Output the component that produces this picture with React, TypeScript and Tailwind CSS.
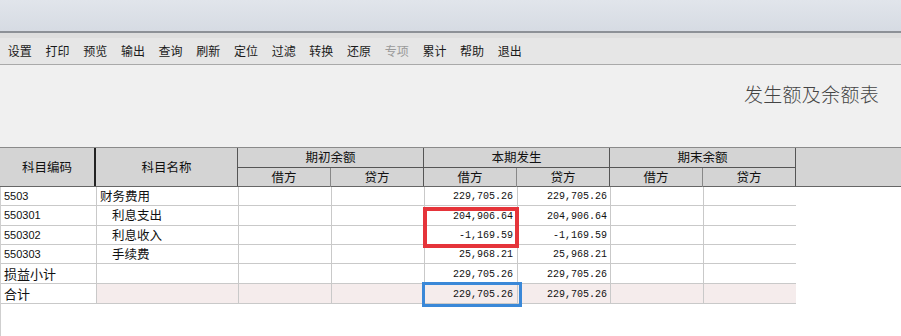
import React from 'react';

// 发生额及余额表 — 工具栏 + 表头 + 明细行

const tools = ['设置', '打印', '预览', '输出', '查询', '刷新', '定位', '过滤', '转换', '还原', '专项', '累计', '帮助', '退出'];

interface Row {
  code: string;
  name: string;
  indent: boolean;
  debit: string;
  credit: string;
  h: string;
  total?: boolean;
}

const rows: Row[] = [
  { code: '5503', name: '财务费用', indent: false, debit: '229,705.26', credit: '229,705.26', h: 'h-[19px]' },
  { code: '550301', name: '利息支出', indent: true, debit: '204,906.64', credit: '204,906.64', h: 'h-[20px]' },
  { code: '550302', name: '利息收入', indent: true, debit: '-1,169.59', credit: '-1,169.59', h: 'h-[19px]' },
  { code: '550303', name: '手续费', indent: true, debit: '25,968.21', credit: '25,968.21', h: 'h-[19px]' },
  { code: '损益小计', name: '', indent: false, debit: '229,705.26', credit: '229,705.26', h: 'h-[20px]' },
  { code: '合计', name: '', indent: false, debit: '229,705.26', credit: '229,705.26', h: 'h-[20px]', total: true },
];

const cjk = "font-['Noto_Sans_CJK_SC',sans-serif]";

function HeaderGroup({ title }: { title: string }) {
  return (
    <div className="w-[186px] flex flex-col border-r border-[#555]">
      <div className="h-[20px] flex items-center justify-center border-b border-[#555] text-[12.5px]">{title}</div>
      <div className="h-[19px] flex">
        <div className="w-[93px] flex items-center justify-center border-r border-[#888] text-[12.5px]">借方</div>
        <div className="flex-1 flex items-center justify-center text-[12.5px]">贷方</div>
      </div>
    </div>
  );
}

export default function App() {
  return (
    <div className={`w-[901px] h-[336px] overflow-hidden bg-white ${cjk} text-[#111]`}>
      <div className="h-[31px] bg-gradient-to-b from-[#e1e5eb] to-[#d6dbe3]" />
      <div className="h-[2px] bg-[#8d9197]" />
      <div className="h-[5px] bg-[#dedede]" />
      <div className="h-[27px] bg-[#e6e6e6] border-b border-[#a9a9a9] flex items-center pl-[1px]">
        {tools.map(t => (
          <div
            key={t}
            className={`w-[37.7px] h-[22px] flex items-center justify-center text-[12px] ${t === '专项' ? 'text-[#9a9a9a]' : 'text-[#1a1a1a]'}`}
          >
            {t}
          </div>
        ))}
      </div>
      <div className="h-[82px] bg-[#f0f0f0] flex justify-end pr-[22px] pt-[15px]">
        <div className="text-[19px] text-[#444] tracking-[0.3px] font-light">发生额及余额表</div>
      </div>

      <div className="relative">
        <div className="flex h-[40px] bg-[#d4d4d4] border-t border-[#8a8a8a] border-b border-b-[#666]">
          <div className="w-[96px] flex items-center justify-center border-r-2 border-[#222] text-[12.5px]">科目编码</div>
          <div className="w-[142px] flex items-center justify-center border-r border-[#555] text-[12.5px]">科目名称</div>
          <HeaderGroup title="期初余额" />
          <HeaderGroup title="本期发生" />
          <HeaderGroup title="期末余额" />
          <div className="flex-1" />
        </div>

        <div className="w-[796px] border-l border-[#cfcfcf]">
          {rows.map(r => {
            const isNum = /^\d/.test(r.code);
            const tint = r.total ? 'bg-[#f5ecec]' : '';
            return (
              <div key={r.code} className={`flex ${r.h} border-b border-[#c9c9c9]`}>
                <div className={`w-[96px] flex items-center pl-[3px] border-r border-[#c9c9c9] ${isNum ? "font-['Liberation_Sans',sans-serif] text-[11px]" : 'text-[13px]'}`}>
                  {r.code}
                </div>
                <div className={`w-[142px] flex items-center border-r border-[#c9c9c9] text-[12.5px] ${r.indent ? 'pl-[15px]' : 'pl-[3px]'} ${tint}`}>
                  {r.name}
                </div>
                <div className={`w-[93px] border-r border-[#c9c9c9] ${tint}`} />
                <div className={`w-[93px] border-r border-[#c9c9c9] ${tint}`} />
                <div className={`w-[93px] flex items-center justify-end pr-[4px] pt-[1px] border-r border-[#c9c9c9] font-['Liberation_Mono',monospace] text-[10px] ${tint}`}>
                  {r.debit}
                </div>
                <div className={`w-[93px] flex items-center justify-end pr-[3px] pt-[1px] border-r border-[#c9c9c9] font-['Liberation_Mono',monospace] text-[10px] ${tint}`}>
                  {r.credit}
                </div>
                <div className={`w-[93px] border-r border-[#c9c9c9] ${tint}`} />
                <div className={`flex-1 ${tint}`} />
              </div>
            );
          })}
          <div className="h-[40px]" />
        </div>

        <div className="absolute left-[423px] top-[60px] w-[96px] h-[41px] border-[4px] border-[#e5343a] pointer-events-none" />
        <div className="absolute left-[422px] top-[135px] w-[100px] h-[25px] border-[3px] border-[#3a88d8] pointer-events-none" />
      </div>
    </div>
  );
}
